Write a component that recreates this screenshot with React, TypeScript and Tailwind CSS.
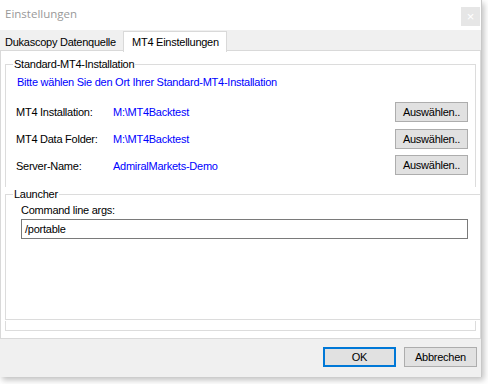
const font = "font-['Liberation_Sans',Arial,sans-serif]";

function SelectButton() {
  return (
    <button className="h-[20px] w-[73px] border border-[#adadad] bg-[#e1e1e1] leading-none text-black">
      Auswählen..
    </button>
  );
}

function PathRow({ label, value, className }: { label: string; value: string; className?: string }) {
  return (
    <div className={`flex h-[20px] items-center pl-[10px] pr-[7px] ${className ?? ""}`}>
      <span className="w-[97px] text-black">{label}</span>
      <span className="flex-1 text-[#0000ff]">{value}</span>
      <SelectButton />
    </div>
  );
}

export default function App() {
  return (
    <div className={`h-[384px] w-[488px] bg-white ${font} text-[11px] leading-[14px] tracking-[-0.25px] whitespace-nowrap`}>
      <div className="flex h-[377px] w-[482px] flex-col border-r border-[#c8c8c8] bg-[#f0f0f0] shadow-[2px_3px_6px_rgba(0,0,0,0.25)]">
        {/* Title bar */}
        <div className="flex h-[30px] items-start bg-white">
          <span className="mt-[7px] ml-[5px] flex-1 font-['Open_Sans',sans-serif] text-[11.5px] tracking-normal text-[#999999]">
            Einstellungen
          </span>
          <div className="mt-[7px] mr-[1px] flex h-[19px] w-[19px] items-center justify-center bg-[#e6e6e6] text-[13px] text-white">
            ×
          </div>
        </div>

        {/* Tabs */}
        <div className="flex h-[21px] items-end">
          <div className="flex h-[17px] w-[123px] items-center border-b border-[#d9d9d9] pl-[5px] text-black">
            Dukascopy Datenquelle
          </div>
          <div className="relative z-10 -mb-px flex h-[21px] w-[104px] items-center border-x border-t border-[#d9d9d9] bg-white pl-[8px] text-black">
            MT4 Einstellungen
          </div>
          <div className="flex-1 border-b border-[#d9d9d9]" />
        </div>

        {/* Tab panel */}
        <div className="flex h-[288px] w-[481px] flex-col border-x border-b border-[#d9d9d9] bg-white">
          {/* Standard group */}
          <div className="relative mt-[13px] ml-[4px] h-[123px] w-[471px] border-x border-t border-[#dcdcdc]">
            <span className="absolute top-[-8px] left-[7px] bg-white px-[1px] text-black">
              Standard-MT4-Installation
            </span>
            <div className="mt-[10px] pl-[11px] text-[#0000ff]">
              Bitte wählen Sie den Ort Ihrer Standard-MT4-Installation
            </div>
            <PathRow label="MT4 Installation:" value="M:\MT4Backtest" className="mt-[13px]" />
            <PathRow label="MT4 Data Folder:" value="M:\MT4Backtest" className="mt-[7px]" />
            <PathRow label="Server-Name:" value="AdmiralMarkets-Demo" className="mt-[6px] [&>span]:translate-y-[1px]" />
          </div>

          {/* Launcher group */}
          <div className="relative mt-[7px] ml-[4px] h-[126px] flex-none border-y border-l border-[#dcdcdc]">
            <span className="absolute top-[-8px] left-[7px] bg-white px-[1px] text-black">Launcher</span>
            <div className="mt-[8px] pl-[15px] text-black">Command line args:</div>
            <div className="mt-[2px] ml-[15px] flex h-[20px] w-[447px] items-center border border-[#7a7a7a] pl-[3px] text-black">
              /portable
            </div>
          </div>

          <div className="mt-[1px] ml-[4px] h-[10px] w-[471px] border-x border-b border-[#dcdcdc]" />
        </div>

        {/* Buttons */}
        <div className="flex justify-end gap-[8px] pt-[8px] pr-[4px]">
          <button className="h-[20px] w-[73px] border-2 border-[#0078d7] bg-[#e1e1e1] text-black">OK</button>
          <button className="h-[20px] w-[73px] border border-[#adadad] bg-[#e1e1e1] text-black">Abbrechen</button>
        </div>
      </div>
    </div>
  );
}
